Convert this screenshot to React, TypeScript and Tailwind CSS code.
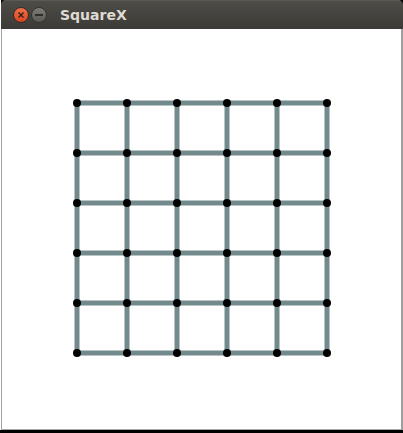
import React from "react";

const N = [0, 1, 2, 3, 4, 5];

function Grid() {
  const p = (i: number) => 7 + 50 * i;
  return (
    <svg width={264} height={264} viewBox="0 0 264 264" className="block">
      {N.map((i) => (
        <line key={"h" + i} x1={p(0)} y1={p(i)} x2={p(5)} y2={p(i)} stroke="#738a8d" strokeWidth={5} />
      ))}
      {N.map((i) => (
        <line key={"v" + i} x1={p(i)} y1={p(0)} x2={p(i)} y2={p(5)} stroke="#738a8d" strokeWidth={5} />
      ))}
      {N.map((i) =>
        N.map((j) => <circle key={i + "-" + j} cx={p(i)} cy={p(j)} r={4} fill="#000" />)
      )}
    </svg>
  );
}

export default function App() {
  return (
    <div className="w-[403px] h-[433px] bg-black flex flex-col overflow-hidden" style={{ fontFamily: '"DejaVu Sans", sans-serif' }}>
      <div className="flex h-[430px]">
        <div className="w-px bg-white" />
        <div className="flex-1 flex flex-col rounded-t-[5px] overflow-hidden bg-[#3c3b37]">
          <div className="h-[29px] flex items-center bg-gradient-to-b from-[#4d4c47] to-[#3c3b37] border-t border-[#5a5953] pl-[12px]">
            <div className="w-[16px] h-[16px] rounded-full bg-gradient-to-b from-[#f0704a] to-[#d9431d] border border-[#3a2a22] flex items-center justify-center">
              <svg width="8" height="8" viewBox="0 0 8 8">
                <path d="M1.5 1.5 L6.5 6.5 M6.5 1.5 L1.5 6.5" stroke="#3a2418" strokeWidth="1.5" />
              </svg>
            </div>
            <div className="ml-[2px] w-[16px] h-[16px] rounded-full bg-gradient-to-b from-[#7d7c76] to-[#5a5954] border border-[#35342f] flex items-center justify-center">
              <div className="w-[8px] h-[2px] bg-[#2f2e2a]" />
            </div>
            <span className="ml-[13px] text-[14px] font-bold text-[#dfdbd2] leading-none">SquareX</span>
          </div>
          <div className="flex-1 flex">
            <div className="w-px bg-[#a3a3a3]" />
            <div className="flex-1 bg-white pl-[68px] pt-[67px]">
              <Grid />
            </div>
            <div className="w-[2px] bg-[#9e9e9e]" />
          </div>
          <div className="h-px bg-[#a8a8a8]" />
        </div>
      </div>
    </div>
  );
}
